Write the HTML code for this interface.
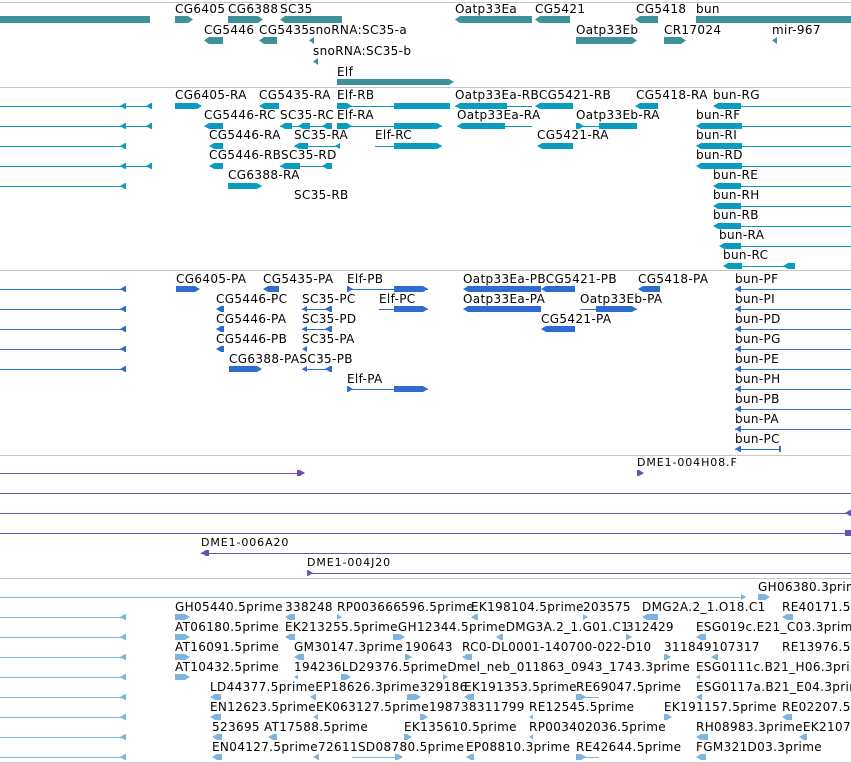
<!DOCTYPE html>
<html><head><meta charset="utf-8"><style>
body{margin:0;width:851px;height:763px;background:#fff;position:relative;overflow:hidden;font-family:"DejaVu Sans","Liberation Sans",sans-serif}
div{position:absolute}
.l{font-size:12px;line-height:12px;white-space:nowrap;color:#000;letter-spacing:0.35px}
.p{font-family:"DejaVu Sans","Liberation Sans",sans-serif;font-size:11px;line-height:12px;white-space:nowrap;letter-spacing:0.9px}
.s{height:1px;background:#c8c8c8;left:0;width:851px}
.g{background:#3f9199;height:7px}
.t{background:#0a9cbf}
.q{background:#2f6cd0}
.u{background:#6f4fae}
.e{background:#7cb5e0}
.la{clip-path:polygon(0 50%,5px 0,100% 0,100% 100%,5px 100%)}
.ra{clip-path:polygon(0 0,calc(100% - 5px) 0,100% 50%,calc(100% - 5px) 100%,0 100%)}
.ln{height:1px}
.bk{height:6px}
</style></head><body>
<div class="s" style="top:2px"></div>
<div class="s" style="top:87px"></div>
<div class="s" style="top:270px"></div>
<div class="s" style="top:455px"></div>
<div class="s" style="top:578px"></div>
<div class="s" style="top:762px"></div>

<!-- GENES -->
<div class="l" style="left:175px;top:3px">CG6405</div>
<div class="l" style="left:228px;top:3px">CG6388</div>
<div class="l" style="left:280px;top:3px">SC35</div>
<div class="l" style="left:455px;top:3px">Oatp33Ea</div>
<div class="l" style="left:535px;top:3px">CG5421</div>
<div class="l" style="left:636px;top:3px">CG5418</div>
<div class="l" style="left:696px;top:3px">bun</div>
<div class="g" style="left:0;top:16px;width:150px"></div>
<div class="g ra" style="left:175px;top:16px;width:18px"></div>
<div class="g ra" style="left:228px;top:16px;width:35px"></div>
<div class="g la" style="left:280px;top:16px;width:62px"></div>
<div class="g la" style="left:455px;top:16px;width:77px"></div>
<div class="g la" style="left:535px;top:16px;width:35px"></div>
<div class="g la" style="left:635px;top:16px;width:23px"></div>
<div class="g" style="left:696px;top:16px;width:155px"></div>
<div class="l" style="left:204px;top:24px">CG5446</div>
<div class="l" style="left:259px;top:24px">CG5435</div>
<div class="l" style="left:309px;top:24px">snoRNA:SC35-a</div>
<div class="l" style="left:576px;top:24px">Oatp33Eb</div>
<div class="l" style="left:664px;top:24px">CR17024</div>
<div class="l" style="left:772px;top:24px">mir-967</div>
<div class="g la" style="left:204px;top:37px;width:19px"></div>
<div class="g la" style="left:259px;top:37px;width:18px"></div>
<div class="g la" style="left:309px;top:37px;width:5px"></div>
<div class="g ra" style="left:576px;top:37px;width:61px"></div>
<div class="g ra" style="left:664px;top:37px;width:22px"></div>
<div class="g la" style="left:772px;top:37px;width:5px"></div>
<div class="l" style="left:313px;top:45px">snoRNA:SC35-b</div>
<div class="g la" style="left:313px;top:58px;width:5px"></div>
<div class="l" style="left:337px;top:66px">Elf</div>
<div class="g ra" style="left:337px;top:79px;width:117px;height:6px"></div>

<!-- TRANSCRIPTS -->
<div class="t ln" style="left:0;top:106px;width:152px"></div><div class="t bk la" style="left:120px;top:103px;width:6px"></div><div class="t bk la" style="left:146px;top:103px;width:6px"></div>
<div class="t ln" style="left:0;top:126px;width:152px"></div><div class="t bk la" style="left:120px;top:123px;width:6px"></div><div class="t bk la" style="left:146px;top:123px;width:6px"></div>
<div class="t ln" style="left:0;top:146px;width:125px"></div><div class="t bk la" style="left:120px;top:143px;width:6px"></div>
<div class="t ln" style="left:0;top:166px;width:152px"></div><div class="t bk la" style="left:120px;top:163px;width:6px"></div><div class="t bk la" style="left:146px;top:163px;width:6px"></div>
<div class="t ln" style="left:0;top:186px;width:125px"></div><div class="t bk la" style="left:120px;top:183px;width:6px"></div>

<div class="l" style="left:175px;top:89px">CG6405-RA</div><div class="t bk ra" style="left:175px;top:103px;width:27px"></div>
<div class="l" style="left:259px;top:89px">CG5435-RA</div><div class="t bk la" style="left:259px;top:103px;width:20px"></div>
<div class="l" style="left:337px;top:89px">Elf-RB</div><div class="t ln" style="left:337px;top:106px;width:113px"></div><div class="t bk ra" style="left:337px;top:103px;width:15px"></div><div class="t bk" style="left:394px;top:103px;width:56px"></div>
<div class="l" style="left:455px;top:89px">Oatp33Ea-RBCG5421-RB</div><div class="t ln" style="left:455px;top:106px;width:77px"></div><div class="t bk la" style="left:455px;top:103px;width:52px"></div><div class="t bk la" style="left:535px;top:103px;width:38px"></div>
<div class="l" style="left:636px;top:89px">CG5418-RA</div><div class="t bk la" style="left:635px;top:103px;width:23px"></div>
<div class="l" style="left:713px;top:89px">bun-RG</div><div class="t bk la" style="left:713px;top:103px;width:28px"></div><div class="t ln" style="left:740px;top:106px;width:111px"></div>

<div class="l" style="left:204px;top:109px">CG5446-RC</div><div class="t bk la" style="left:204px;top:123px;width:19px"></div>
<div class="l" style="left:280px;top:109px">SC35-RC</div><div class="t ln" style="left:280px;top:126px;width:52px"></div><div class="t bk la" style="left:280px;top:123px;width:12px"></div><div class="t bk la" style="left:298px;top:123px;width:12px"></div><div class="t bk la" style="left:322px;top:123px;width:10px"></div>
<div class="l" style="left:337px;top:109px">Elf-RA</div><div class="t ln" style="left:337px;top:126px;width:105px"></div><div class="t bk ra" style="left:337px;top:123px;width:15px"></div><div class="t bk ra" style="left:394px;top:123px;width:48px"></div>
<div class="l" style="left:457px;top:109px">Oatp33Ea-RA</div><div class="t ln" style="left:457px;top:126px;width:75px"></div><div class="t bk la" style="left:457px;top:123px;width:48px"></div>
<div class="l" style="left:576px;top:109px">Oatp33Eb-RA</div><div class="t ln" style="left:576px;top:126px;width:61px"></div><div class="t bk ra" style="left:576px;top:123px;width:8px"></div><div class="t bk" style="left:599px;top:123px;width:38px"></div>
<div class="l" style="left:696px;top:109px">bun-RF</div><div class="t bk la" style="left:696px;top:123px;width:46px"></div><div class="t ln" style="left:740px;top:126px;width:111px"></div>

<div class="l" style="left:209px;top:129px">CG5446-RA</div><div class="t bk la" style="left:209px;top:143px;width:14px"></div>
<div class="l" style="left:294px;top:129px">SC35-RA</div><div class="t ln" style="left:294px;top:146px;width:46px"></div><div class="t bk la" style="left:294px;top:143px;width:14px"></div><div class="t bk la" style="left:335px;top:143px;width:5px"></div>
<div class="l" style="left:375px;top:129px">Elf-RC</div><div class="t ln" style="left:375px;top:146px;width:67px"></div><div class="t bk ra" style="left:394px;top:143px;width:48px"></div>
<div class="l" style="left:537px;top:129px">CG5421-RA</div><div class="t bk la" style="left:537px;top:143px;width:36px"></div>
<div class="l" style="left:696px;top:129px">bun-RI</div><div class="t bk la" style="left:696px;top:143px;width:46px"></div><div class="t ln" style="left:740px;top:146px;width:111px"></div>

<div class="l" style="left:209px;top:149px">CG5446-RBSC35-RD</div><div class="t bk la" style="left:209px;top:163px;width:14px"></div><div class="t ln" style="left:280px;top:166px;width:52px"></div><div class="t bk la" style="left:280px;top:163px;width:20px"></div><div class="t bk la" style="left:322px;top:163px;width:10px"></div>
<div class="l" style="left:696px;top:149px">bun-RD</div><div class="t bk la" style="left:696px;top:163px;width:46px"></div><div class="t ln" style="left:740px;top:166px;width:111px"></div>

<div class="l" style="left:228px;top:169px">CG6388-RA</div><div class="t bk ra" style="left:228px;top:183px;width:34px"></div>
<div class="l" style="left:713px;top:169px">bun-RE</div><div class="t bk la" style="left:713px;top:183px;width:28px"></div><div class="t ln" style="left:740px;top:186px;width:111px"></div>
<div class="l" style="left:294px;top:189px">SC35-RB</div>
<div class="l" style="left:713px;top:189px">bun-RH</div><div class="t bk la" style="left:713px;top:203px;width:28px"></div><div class="t ln" style="left:740px;top:206px;width:111px"></div>
<div class="l" style="left:713px;top:209px">bun-RB</div><div class="t bk la" style="left:713px;top:223px;width:28px"></div><div class="t ln" style="left:740px;top:226px;width:111px"></div>
<div class="l" style="left:719px;top:229px">bun-RA</div><div class="t bk la" style="left:719px;top:243px;width:22px"></div><div class="t ln" style="left:740px;top:246px;width:111px"></div>
<div class="l" style="left:723px;top:249px">bun-RC</div><div class="t bk la" style="left:723px;top:263px;width:19px"></div><div class="t ln" style="left:740px;top:266px;width:50px"></div><div class="t bk la" style="left:783px;top:263px;width:12px"></div>

<!-- PROTEINS -->
<div class="q ln" style="left:0;top:289px;width:125px"></div><div class="q bk la" style="left:120px;top:286px;width:6px"></div>
<div class="q ln" style="left:0;top:309px;width:125px"></div><div class="q bk la" style="left:120px;top:306px;width:6px"></div>
<div class="q ln" style="left:0;top:329px;width:125px"></div><div class="q bk la" style="left:120px;top:326px;width:6px"></div>
<div class="q ln" style="left:0;top:349px;width:125px"></div><div class="q bk la" style="left:120px;top:346px;width:6px"></div>
<div class="q ln" style="left:0;top:369px;width:125px"></div><div class="q bk la" style="left:120px;top:366px;width:6px"></div>

<div class="l" style="left:176px;top:273px">CG6405-PA</div><div class="q bk ra" style="left:176px;top:286px;width:24px"></div>
<div class="l" style="left:263px;top:273px">CG5435-PA</div><div class="q bk la" style="left:263px;top:286px;width:16px"></div>
<div class="l" style="left:347px;top:273px">Elf-PB</div><div class="q ln" style="left:347px;top:289px;width:81px"></div><div class="q bk ra" style="left:347px;top:286px;width:6px"></div><div class="q bk ra" style="left:394px;top:286px;width:34px"></div>
<div class="l" style="left:463px;top:273px">Oatp33Ea-PBCG5421-PB</div><div class="q bk la" style="left:463px;top:286px;width:78px"></div><div class="q bk la" style="left:541px;top:286px;width:34px"></div>
<div class="l" style="left:638px;top:273px">CG5418-PA</div><div class="q bk la" style="left:638px;top:286px;width:22px"></div>
<div class="l" style="left:735px;top:273px">bun-PF</div><div class="q ln" style="left:735px;top:289px;width:116px"></div><div class="q bk la" style="left:735px;top:286px;width:6px"></div>

<div class="l" style="left:216px;top:293px">CG5446-PC</div><div class="q bk la" style="left:216px;top:306px;width:8px"></div>
<div class="l" style="left:302px;top:293px">SC35-PC</div><div class="q ln" style="left:302px;top:309px;width:30px"></div><div class="q bk la" style="left:302px;top:306px;width:5px"></div><div class="q bk la" style="left:325px;top:306px;width:7px"></div>
<div class="l" style="left:379px;top:293px">Elf-PC</div><div class="q ln" style="left:379px;top:309px;width:49px"></div><div class="q bk ra" style="left:394px;top:306px;width:34px"></div>
<div class="l" style="left:463px;top:293px">Oatp33Ea-PA</div><div class="q bk la" style="left:463px;top:306px;width:78px"></div>
<div class="l" style="left:580px;top:293px">Oatp33Eb-PA</div><div class="q ln" style="left:580px;top:309px;width:57px"></div><div class="q bk ra" style="left:596px;top:306px;width:41px"></div>
<div class="l" style="left:735px;top:293px">bun-PI</div><div class="q ln" style="left:735px;top:309px;width:116px"></div><div class="q bk la" style="left:735px;top:306px;width:6px"></div>

<div class="l" style="left:216px;top:313px">CG5446-PA</div><div class="q bk la" style="left:216px;top:326px;width:8px"></div>
<div class="l" style="left:302px;top:313px">SC35-PD</div><div class="q ln" style="left:302px;top:329px;width:30px"></div><div class="q bk la" style="left:302px;top:326px;width:5px"></div><div class="q bk la" style="left:325px;top:326px;width:7px"></div>
<div class="l" style="left:541px;top:313px">CG5421-PA</div><div class="q bk la" style="left:541px;top:326px;width:34px"></div>
<div class="l" style="left:735px;top:313px">bun-PD</div><div class="q ln" style="left:735px;top:329px;width:116px"></div><div class="q bk la" style="left:735px;top:326px;width:6px"></div>

<div class="l" style="left:216px;top:333px">CG5446-PB</div><div class="q bk la" style="left:216px;top:346px;width:8px"></div>
<div class="l" style="left:302px;top:333px">SC35-PA</div><div class="q bk la" style="left:302px;top:346px;width:5px"></div>
<div class="l" style="left:735px;top:333px">bun-PG</div><div class="q ln" style="left:735px;top:349px;width:116px"></div><div class="q bk la" style="left:735px;top:346px;width:6px"></div>

<div class="l" style="left:229px;top:353px">CG6388-PASC35-PB</div><div class="q bk ra" style="left:229px;top:366px;width:33px"></div><div class="q ln" style="left:302px;top:369px;width:30px"></div><div class="q bk la" style="left:302px;top:366px;width:5px"></div><div class="q bk la" style="left:325px;top:366px;width:7px"></div>
<div class="l" style="left:735px;top:353px">bun-PE</div><div class="q ln" style="left:735px;top:369px;width:116px"></div><div class="q bk la" style="left:735px;top:366px;width:6px"></div>

<div class="l" style="left:347px;top:373px">Elf-PA</div><div class="q ln" style="left:347px;top:389px;width:81px"></div><div class="q bk ra" style="left:347px;top:386px;width:6px"></div><div class="q bk ra" style="left:394px;top:386px;width:34px"></div>
<div class="l" style="left:735px;top:373px">bun-PH</div><div class="q ln" style="left:735px;top:389px;width:116px"></div><div class="q bk la" style="left:735px;top:386px;width:6px"></div>
<div class="l" style="left:735px;top:393px">bun-PB</div><div class="q ln" style="left:735px;top:409px;width:116px"></div><div class="q bk la" style="left:735px;top:406px;width:6px"></div>
<div class="l" style="left:735px;top:413px">bun-PA</div><div class="q ln" style="left:735px;top:429px;width:116px"></div><div class="q bk la" style="left:735px;top:426px;width:6px"></div>
<div class="l" style="left:735px;top:433px">bun-PC</div><div class="q ln" style="left:735px;top:449px;width:45px"></div><div class="q bk la" style="left:735px;top:446px;width:6px"></div><div class="q bk" style="left:779px;top:446px;width:2px"></div>

<!-- PURPLE -->
<div class="u ln" style="left:0;top:473px;width:300px"></div><div class="u bk ra" style="left:297px;top:470px;width:8px"></div>
<div class="p" style="left:637px;top:457px">DME1-004H08.F</div><div class="u bk ra" style="left:637px;top:470px;width:7px"></div>
<div class="u ln" style="left:0;top:493px;width:851px"></div>
<div class="u ln" style="left:0;top:513px;width:851px"></div><div class="u bk la" style="left:845px;top:510px;width:6px"></div>
<div class="u ln" style="left:0;top:533px;width:851px"></div><div class="u bk" style="left:845px;top:530px;width:6px"></div>
<div class="p" style="left:201px;top:537px">DME1-006A20</div><div class="u ln" style="left:201px;top:553px;width:650px"></div><div class="u bk la" style="left:201px;top:550px;width:8px"></div>
<div class="p" style="left:307px;top:557px">DME1-004J20</div><div class="u ln" style="left:307px;top:573px;width:544px"></div><div class="u bk ra" style="left:307px;top:570px;width:6px"></div>

<!-- ESTs -->
<div class="e ln" style="left:0;top:597px;width:745px"></div><div class="e bk ra" style="left:741px;top:594px;width:5px"></div>
<div class="l" style="left:758px;top:581px">GH06380.3prime</div><div class="e bk ra" style="left:758px;top:594px;width:12px"></div>
<div class="e ln" style="left:0;top:617px;width:125px"></div><div class="e bk la" style="left:120px;top:614px;width:6px"></div>
<div class="e ln" style="left:0;top:637px;width:125px"></div><div class="e bk la" style="left:120px;top:634px;width:6px"></div>
<div class="e ln" style="left:0;top:657px;width:125px"></div><div class="e bk la" style="left:120px;top:654px;width:6px"></div>
<div class="e ln" style="left:0;top:677px;width:125px"></div><div class="e bk la" style="left:120px;top:674px;width:6px"></div>
<div class="e ln" style="left:0;top:697px;width:125px"></div><div class="e bk la" style="left:120px;top:694px;width:6px"></div>
<div class="e ln" style="left:0;top:717px;width:125px"></div><div class="e bk la" style="left:120px;top:714px;width:6px"></div>
<div class="e ln" style="left:0;top:737px;width:125px"></div><div class="e bk la" style="left:120px;top:734px;width:6px"></div>
<div class="e ln" style="left:0;top:757px;width:125px"></div><div class="e bk la" style="left:120px;top:754px;width:6px"></div>

<div class="l" style="left:175px;top:601px">GH05440.5prime</div><div class="e bk ra" style="left:175px;top:614px;width:15px"></div>
<div class="l" style="left:285px;top:601px">338248</div><div class="e bk la" style="left:285px;top:614px;width:10px"></div>
<div class="l" style="left:337px;top:601px">RP003666596.5prime</div><div class="e bk ra" style="left:337px;top:614px;width:5px"></div>
<div class="l" style="left:471px;top:601px">EK198104.5prime</div><div class="e bk la" style="left:471px;top:614px;width:7px"></div>
<div class="l" style="left:583px;top:601px">203575</div><div class="e bk ra" style="left:583px;top:614px;width:5px"></div>
<div class="l" style="left:642px;top:601px">DMG2A.2_1.O18.C1</div><div class="e bk la" style="left:642px;top:614px;width:16px"></div>
<div class="l" style="left:782px;top:601px">RE40171.5prime</div><div class="e bk la" style="left:782px;top:614px;width:11px"></div>

<div class="l" style="left:175px;top:621px">AT06180.5prime</div><div class="e bk ra" style="left:175px;top:634px;width:15px"></div>
<div class="l" style="left:285px;top:621px">EK213255.5primeGH12344.5primeDMG3A.2_1.G01.C1</div><div class="e bk la" style="left:285px;top:634px;width:10px"></div><div class="e bk ra" style="left:393px;top:634px;width:12px"></div><div class="e bk la" style="left:496px;top:634px;width:7px"></div>
<div class="l" style="left:626px;top:621px">312429</div><div class="e bk ra" style="left:626px;top:634px;width:6px"></div>
<div class="l" style="left:696px;top:621px">ESG019c.E21_C03.3prime</div><div class="e bk la" style="left:696px;top:634px;width:10px"></div>

<div class="l" style="left:175px;top:641px">AT16091.5prime</div><div class="e bk ra" style="left:175px;top:654px;width:15px"></div>
<div class="l" style="left:294px;top:641px">GM30147.3prime</div><div class="e bk la" style="left:294px;top:654px;width:10px"></div>
<div class="l" style="left:405px;top:641px">190643</div><div class="e bk ra" style="left:405px;top:654px;width:7px"></div>
<div class="l" style="left:462px;top:641px">RC0-DL0001-140700-022-D10</div><div class="e bk la" style="left:462px;top:654px;width:10px"></div>
<div class="l" style="left:664px;top:641px">311849107317</div><div class="e bk ra" style="left:664px;top:654px;width:7px"></div><div class="e bk la" style="left:711px;top:654px;width:7px"></div>
<div class="l" style="left:782px;top:641px">RE13976.5prime</div>

<div class="l" style="left:175px;top:661px">AT10432.5prime</div><div class="e bk ra" style="left:175px;top:674px;width:15px"></div>
<div class="l" style="left:294px;top:661px">194236LD29376.5primeDmel_neb_011863_0943_1743.3prime</div><div class="e bk la" style="left:294px;top:674px;width:4px"></div><div class="e bk ra" style="left:341px;top:674px;width:10px"></div><div class="e bk ra" style="left:443px;top:674px;width:5px"></div>
<div class="l" style="left:696px;top:661px">ESG0111c.B21_H06.3prime</div><div class="e bk la" style="left:696px;top:674px;width:4px"></div>

<div class="l" style="left:210px;top:681px">LD44377.5primeEP18626.3prime329186</div><div class="e bk la" style="left:210px;top:694px;width:11px"></div><div class="e bk la" style="left:310px;top:694px;width:6px"></div><div class="e bk ra" style="left:407px;top:694px;width:14px"></div>
<div class="l" style="left:464px;top:681px">EK191353.5prime</div><div class="e bk la" style="left:464px;top:694px;width:10px"></div>
<div class="l" style="left:576px;top:681px">RE69047.5prime</div><div class="e ln" style="left:576px;top:697px;width:23px"></div><div class="e bk ra" style="left:576px;top:694px;width:10px"></div>
<div class="l" style="left:696px;top:681px">ESG0117a.B21_E04.3prime</div><div class="e bk la" style="left:696px;top:694px;width:6px"></div>

<div class="l" style="left:210px;top:701px">EN12623.5primeEK063127.5prime198738311799</div><div class="e bk la" style="left:210px;top:714px;width:11px"></div><div class="e bk la" style="left:313px;top:714px;width:5px"></div><div class="e bk ra" style="left:420px;top:714px;width:8px"></div>
<div class="l" style="left:529px;top:701px">RE12545.5prime</div><div class="e bk la" style="left:529px;top:714px;width:4px"></div>
<div class="l" style="left:664px;top:701px">EK191157.5prime</div><div class="e bk ra" style="left:664px;top:714px;width:8px"></div>
<div class="l" style="left:782px;top:701px">RE02207.5prime</div><div class="e bk la" style="left:782px;top:714px;width:10px"></div>

<div class="l" style="left:212px;top:721px">523695</div><div class="e bk la" style="left:212px;top:734px;width:10px"></div>
<div class="l" style="left:264px;top:721px">AT17588.5prime</div><div class="e bk la" style="left:268px;top:734px;width:9px"></div>
<div class="l" style="left:404px;top:721px">EK135610.5prime</div><div class="e bk ra" style="left:404px;top:734px;width:8px"></div>
<div class="l" style="left:529px;top:721px">RP003402036.5prime</div><div class="e bk la" style="left:529px;top:734px;width:4px"></div>
<div class="l" style="left:696px;top:721px">RH08983.3primeEK210703.5prime</div><div class="e bk la" style="left:696px;top:734px;width:12px"></div><div class="e bk la" style="left:799px;top:734px;width:8px"></div>

<div class="l" style="left:212px;top:741px">EN04127.5prime72611SD08780.5prime</div><div class="e bk la" style="left:212px;top:754px;width:10px"></div><div class="e bk la" style="left:313px;top:754px;width:6px"></div><div class="e ln" style="left:352px;top:757px;width:50px"></div><div class="e bk ra" style="left:395px;top:754px;width:8px"></div>
<div class="l" style="left:466px;top:741px">EP08810.3prime</div><div class="e bk la" style="left:466px;top:754px;width:8px"></div>
<div class="l" style="left:576px;top:741px">RE42644.5prime</div><div class="e ln" style="left:576px;top:757px;width:23px"></div><div class="e bk ra" style="left:576px;top:754px;width:10px"></div>
<div class="l" style="left:696px;top:741px">FGM321D03.3prime</div><div class="e bk la" style="left:696px;top:754px;width:10px"></div>
</body></html>
